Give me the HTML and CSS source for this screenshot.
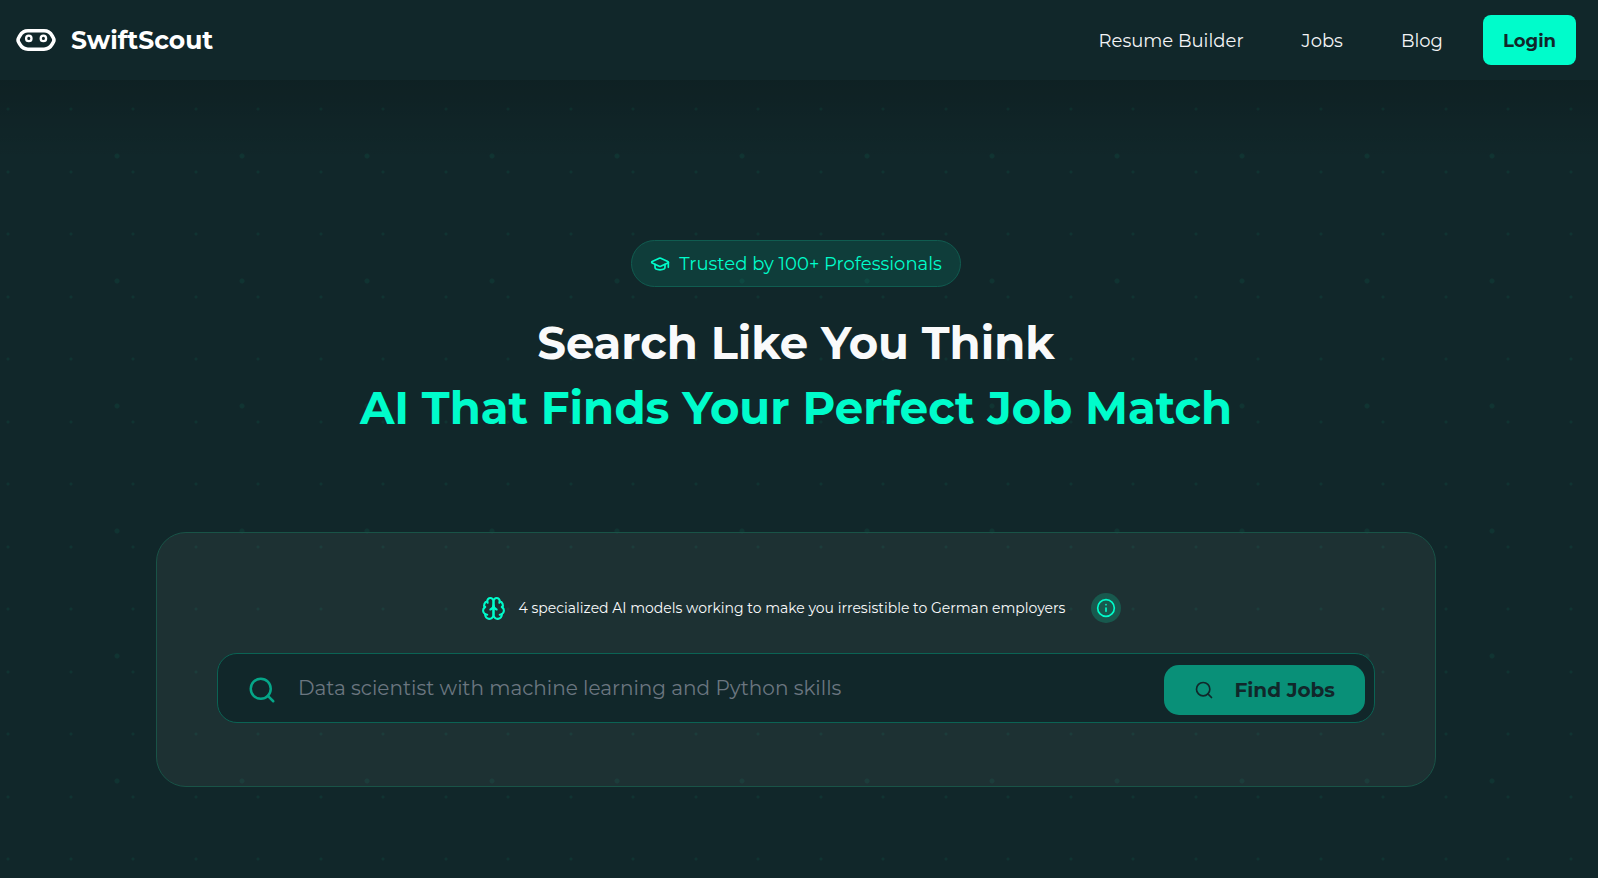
FILE: index.html
```
<!DOCTYPE html>
<html lang="en">
<head>
<meta charset="utf-8">
<meta name="viewport" content="width=device-width, initial-scale=1">
<title>SwiftScout</title>
<link rel="stylesheet" href="styles.css">
</head>
<body>
<header class="header">
  <a class="brand" href="#">
    <svg class="brand-icon" viewBox="0 0 40 24" fill="none" stroke="#fff">
      <path d="M12 2.800h16c4 0 6.500 2 8.200 5l1 1.800c1 1.600 1 3.200 0 4.800l-1 1.800c-1.700 3-4.200 5-8.200 5H12c-4 0-6.500-2-8.200-5l-1-1.800c-1-1.600-1-3.200 0-4.800l1-1.800C5.500 4.800 8 2.800 12 2.800z" stroke-width="3.600"/>
      <circle cx="12.800" cy="10.400" r="2.700" stroke-width="2.300"/>
      <circle cx="27.400" cy="10.400" r="2.700" stroke-width="2.300"/>
    </svg>
    <span>SwiftScout</span>
  </a>
  <nav class="nav">
    <a class="nav-link" href="#">Resume Builder</a>
    <a class="nav-link" href="#">Jobs</a>
    <a class="nav-link" href="#">Blog</a>
    <button class="login" type="button">Login</button>
  </nav>
</header>
<main class="hero">
  <div class="badge">
    <svg class="badge-icon" viewBox="0 0 24 24" fill="none" stroke="currentColor" stroke-width="2" stroke-linecap="round" stroke-linejoin="round"><path d="M21.420 10.922a1 1 0 0 0-.019-1.838L12.830 5.180a2 2 0 0 0-1.660 0L2.600 9.080a1 1 0 0 0 0 1.832l8.570 3.908a2 2 0 0 0 1.660 0z"/><path d="M22 10v6"/><path d="M6 12.500V16a6 3 0 0 0 12 0v-3.500"/></svg>
    <span>Trusted by 100+ Professionals</span>
  </div>
  <h1 class="title">Search Like You Think<span class="title-accent">AI That Finds Your Perfect Job Match</span></h1>
  <section class="card">
    <div class="note">
      <svg class="note-icon" viewBox="0 0 24 24" fill="none" stroke="currentColor" stroke-width="2" stroke-linecap="round" stroke-linejoin="round"><path d="M12 5a3 3 0 1 0-5.997.125 4 4 0 0 0-2.526 5.770 4 4 0 0 0 .556 6.588A4 4 0 1 0 12 18Z"/><path d="M12 5a3 3 0 1 1 5.997.125 4 4 0 0 1 2.526 5.770 4 4 0 0 1-.556 6.588A4 4 0 1 1 12 18Z"/><path d="M15 13a4.500 4.500 0 0 1-3-4 4.500 4.500 0 0 1-3 4"/><path d="M17.599 6.500a3 3 0 0 0 .399-1.375"/><path d="M6.003 5.125A3 3 0 0 0 6.401 6.500"/><path d="M3.477 10.896a4 4 0 0 1 .585-.396"/><path d="M19.938 10.500a4 4 0 0 1 .585.396"/><path d="M6 18a4 4 0 0 1-1.967-.516"/><path d="M19.967 17.484A4 4 0 0 1 18 18"/></svg>
      <span class="note-text">4 specialized AI models working to make you irresistible to German employers</span>
      <button class="info" type="button" aria-label="More information">
        <svg class="info-icon" viewBox="0 0 24 24" fill="none" stroke="currentColor" stroke-width="2" stroke-linecap="round" stroke-linejoin="round"><circle cx="12" cy="12" r="10"/><path d="M12 16v-4"/><path d="M12 8h.01"/></svg>
      </button>
    </div>
    <form class="search">
      <svg class="search-icon" viewBox="0 0 24 24" fill="none" stroke="currentColor" stroke-width="2" stroke-linecap="round" stroke-linejoin="round"><circle cx="11" cy="11" r="8"/><path d="m21 21-4.300-4.300"/></svg>
      <input class="search-input" type="text" aria-label="Job search" placeholder="Data scientist with machine learning and Python skills">
      <button class="find" type="button">
        <svg class="find-icon" viewBox="0 0 24 24" fill="none" stroke="currentColor" stroke-width="2" stroke-linecap="round" stroke-linejoin="round"><circle cx="11" cy="11" r="8"/><path d="m21 21-4.300-4.300"/></svg>
        <span>Find Jobs</span>
      </button>
    </form>
  </section>
</main>
</body>
</html>
```
FILE: styles.css
```
* { box-sizing: border-box; }

body {
  margin: 0;
  min-height: 100vh;
  background: #11272a;
  color: #fff;
  font-family: Montserrat, Inter, "Open Sans", sans-serif;
}

button, input { font: inherit; }

.header {
  display: flex;
  align-items: center;
  justify-content: space-between;
  height: 80px;
  padding: 0 22px 0 16px;
}

.brand {
  display: flex;
  align-items: center;
  gap: 15px;
  color: #fff;
  font-size: 25px;
  font-weight: 700;
  text-decoration: none;
}

.brand-icon { width: 40px; height: 24px; }

.nav { display: flex; align-items: center; gap: 58px; }

.nav-link {
  padding-top: 2px;
  color: #f3f4f6;
  font-size: 18px;
  text-decoration: none;
}

.login {
  height: 50px;
  margin-left: -18px;
  padding: 1px 20px 0;
  border: 0;
  border-radius: 8px;
  background: #00fccb;
  color: #11272a;
  font-size: 18px;
  font-weight: 700;
}

.hero {
  display: flex;
  flex-direction: column;
  align-items: center;
  min-height: calc(100vh - 80px);
  padding: 160px 6px 88px 0;
  background-image:
    linear-gradient(rgba(0, 0, 0, 0.16), transparent),
    radial-gradient(circle at 8px 29px, rgba(0, 255, 170, 0.06) 1px, transparent 2px),
    radial-gradient(circle at 71px 29px, rgba(0, 255, 170, 0.06) 1px, transparent 2px),
    radial-gradient(circle at 8px 92px, rgba(0, 255, 170, 0.06) 1px, transparent 2px),
    radial-gradient(circle at 71px 92px, rgba(0, 255, 170, 0.06) 1px, transparent 2px),
    radial-gradient(circle at 117px 76px, rgba(0, 255, 170, 0.06) 2px, transparent 3px);
  background-size: 100% 80px, 125px 125px, 125px 125px, 125px 125px, 125px 125px, 125px 125px;
  background-repeat: no-repeat, repeat, repeat, repeat, repeat, repeat;
}

.badge {
  display: flex;
  align-items: center;
  gap: 9px;
  height: 47px;
  padding: 0 18px;
  border: 1px solid #105c50;
  border-radius: 24px;
  background: rgba(0, 255, 204, 0.1);
  color: #00fccb;
  font-size: 18px;
}

.badge-icon { width: 20px; height: 20px; }

.title {
  margin: 23px 0 0;
  color: #f9fafb;
  font-size: 45px;
  font-weight: 700;
  line-height: 65px;
  text-align: center;
}

.title-accent { display: block; color: #00fccb; }

.card {
  width: calc(100% - 312px);
  max-width: 1280px;
  margin-top: 92px;
  padding: 60px 60px 63px;
  border: 1px solid #195347;
  border-radius: 30px;
  background: rgba(255, 240, 230, 0.05);
}

.note {
  display: flex;
  align-items: center;
  justify-content: center;
  margin-left: 10px;
}

.note-icon { width: 25px; height: 25px; margin-right: 13px; color: #00fccb; }

.note-text { color: #f9fafb; font-size: 14px; }

.info {
  display: grid;
  place-items: center;
  width: 30px;
  height: 30px;
  margin-left: 26px;
  padding: 0;
  border: 0;
  border-radius: 50%;
  background: #18594e;
  color: #00fccb;
}

.info-icon { width: 20px; height: 20px; }

.search {
  display: flex;
  align-items: center;
  height: 70px;
  margin-top: 30px;
  padding: 4px 9px 0 29px;
  border: 1px solid #0b6354;
  border-radius: 20px;
  background: #11272a;
}

.search-icon { width: 30px; height: 30px; color: #05a688; }

.search-input {
  flex: 1;
  min-width: 0;
  height: 50px;
  padding: 0 20px 4px 21px;
  border: 0;
  outline: 0;
  background: transparent;
  color: #fff;
  font-size: 20px;
}

.search-input::placeholder { color: #6b7680; opacity: 1; }

.find {
  display: flex;
  align-items: center;
  gap: 20px;
  height: 50px;
  padding: 0 30px;
  border: 0;
  border-radius: 15px;
  background: #099078;
  color: #11272a;
  font-size: 20px;
  font-weight: 700;
}

.find-icon { width: 20px; height: 20px; }
```
